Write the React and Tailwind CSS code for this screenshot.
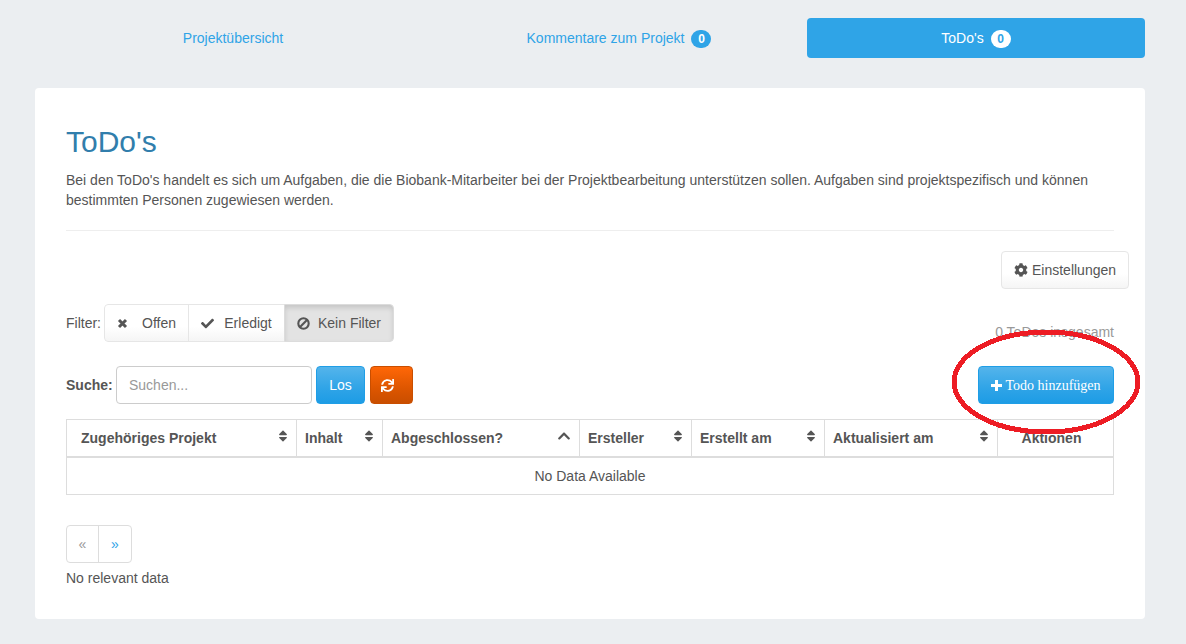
import React from 'react';
import { FaCheck, FaCog, FaSync, FaSort, FaChevronUp } from 'react-icons/fa';

const columns = [
  { label: 'Zugehöriges Projekt', width: 'w-[230px]', pad: 'pl-[14px] pr-[6px]' },
  { label: 'Inhalt', width: 'w-[86px]' },
  { label: 'Abgeschlossen?', width: 'w-[197px]', pad: 'pl-[8px] pr-[8px]', sorted: true },
  { label: 'Ersteller', width: 'w-[112px]' },
  { label: 'Erstellt am', width: 'w-[133px]' },
  { label: 'Aktualisiert am', width: 'w-[173px]' },
];

const btnDefault = 'bg-[linear-gradient(#ffffff,#ffffff_60%,#f5f5f5)] border border-[#e6e6e6]';
const btnPrimary = 'bg-[linear-gradient(#54b4eb,#2fa4e7_60%,#1d9ce5)] border border-[#1f9ee6] text-white';

function CrossIcon() {
  return (
    <svg width="11" height="11" viewBox="0 0 11 11">
      <path d="M2 2 L9 9 M9 2 L2 9" stroke="currentColor" strokeWidth="3" fill="none" />
    </svg>
  );
}

function BanIcon() {
  return (
    <svg width="13" height="13" viewBox="0 0 13 13">
      <circle cx="6.5" cy="6.5" r="5.2" stroke="currentColor" strokeWidth="2.1" fill="none" />
      <path d="M2.8 10.2 L10.2 2.8" stroke="currentColor" strokeWidth="2.1" fill="none" />
    </svg>
  );
}

function PlusIcon() {
  return (
    <svg width="11" height="11" viewBox="0 0 11 11">
      <path d="M5.5 0 V11 M0 5.5 H11" stroke="currentColor" strokeWidth="3" fill="none" />
    </svg>
  );
}

function FilterButton({ icon, label, width, gap, active, extra }) {
  return (
    <div
      className={`${width} ${extra} h-[38px] flex items-center justify-center ${gap} ${
        active ? 'bg-[#e3e3e3] border border-[#dcdcdc] shadow-[inset_0_3px_5px_rgba(0,0,0,0.125)]' : btnDefault
      }`}
    >
      {icon}
      <span>{label}</span>
    </div>
  );
}

export default function App() {
  return (
    <div className="relative h-[644px] overflow-hidden bg-[#ebeef1] text-sm leading-5 text-[#555555] font-['Liberation_Sans',Arial,sans-serif]">
      {/* tabs */}
      <div className="flex px-[35px] pt-[18px] h-[88px]">
        <div className="w-[396px] h-10 flex items-center justify-center text-[#2fa4e7]">Projektübersicht</div>
        <div className="w-[376px] h-10 flex items-center justify-center gap-[7px] text-[#2fa4e7]">
          Kommentare zum Projekt
          <span className="mt-0.5 w-5 h-[18px] rounded-[10px] bg-[#2fa4e7] text-white text-xs font-bold flex items-center justify-center">0</span>
        </div>
        <div className="w-[338px] h-10 rounded bg-[#2fa4e7] text-white flex items-center justify-center gap-[7px]">
          ToDo's
          <span className="mt-0.5 w-5 h-[18px] rounded-[10px] bg-white text-[#2fa4e7] text-xs font-bold flex items-center justify-center">0</span>
        </div>
      </div>

      {/* main card */}
      <div className="ml-[35px] w-[1110px] h-[531px] rounded bg-white pt-[37px] px-[31px]">
        <h1 className="text-[30px] leading-[33px] text-[#317eac]">ToDo's</h1>
        <p className="mt-3 text-[14px] leading-5">
          Bei den ToDo's handelt es sich um Aufgaben, die die Biobank-Mitarbeiter bei der Projektbearbeitung unterstützen sollen. Aufgaben sind projektspezifisch und können bestimmten Personen zugewiesen werden.
        </p>
        <div className="mt-5 h-px bg-[#eeeeee]" />

        <div className="mt-5 flex justify-end -mr-[15px]">
          <div className={`${btnDefault} w-[128px] h-[38px] rounded flex items-center justify-center gap-1`}>
            <FaCog className="text-[14px]" />
            Einstellungen
          </div>
        </div>

        <div className="mt-[15px] flex justify-between items-end">
          <div>
            <div className="flex items-center gap-[3px]">
              Filter:
              <div className="flex rounded overflow-hidden">
                <FilterButton extra="rounded-l" width="w-[85px]" gap="gap-[14px]" icon={<CrossIcon />} label="Offen" />
                <FilterButton extra="-ml-px" width="w-[97px]" gap="gap-[10px]" icon={<FaCheck className="text-[13px]" />} label="Erledigt" />
                <FilterButton extra="-ml-px rounded-r" width="w-[110px]" gap="gap-[8px]" active icon={<BanIcon />} label="Kein Filter" />
              </div>
            </div>
            <div className="mt-6 flex items-center">
              <span className="font-bold w-[50px]">Suche:</span>
              <div className="w-[196px] h-[38px] rounded border border-[#cccccc] px-3 flex items-center text-[#999999]">Suchen...</div>
              <div className={`${btnPrimary} ml-1 w-[49px] h-[38px] rounded flex items-center justify-center`}>Los</div>
              <div className="ml-[5px] w-[43px] h-[38px] rounded border border-[#c94e00] bg-[linear-gradient(#ff6707,#dd5600_60%,#c94e00)] text-white flex items-center justify-center pr-2">
                <FaSync className="text-[13px]" />
              </div>
            </div>
          </div>
          <div className="flex flex-col items-end">
            <div className="text-[#999999]">0 ToDos insgesamt</div>
            <div className={`${btnPrimary} mt-6 w-[136px] h-[38px] rounded flex items-center justify-center gap-[3px] font-['Liberation_Serif',serif]`}>
              <PlusIcon />
              <span className="pt-px">Todo hinzufügen</span>
            </div>
          </div>
        </div>

        {/* table */}
        <table className="mt-[15px] w-full table-fixed border-collapse border border-[#dddddd]">
          <thead>
            <tr className="h-[37px] border-b-2 border-[#dddddd]">
              {columns.map((col) => (
                <th key={col.label} className={`${col.width} border-r border-[#dddddd] p-0 font-bold text-left`}>
                  <div className={`flex items-center justify-between ${col.pad || 'pl-[8px] pr-[6px]'}`}>
                    <span>{col.label}</span>
                    {col.sorted ? <FaChevronUp className="text-[14px] -mt-1" /> : <FaSort className="text-[14px] -mt-1" />}
                  </div>
                </th>
              ))}
              <th className="p-0 pr-2 font-bold text-center">Aktionen</th>
            </tr>
          </thead>
          <tbody>
            <tr className="h-[38px]">
              <td colSpan={7} className="p-0 text-center">No Data Available</td>
            </tr>
          </tbody>
        </table>

        {/* pagination */}
        <div className="mt-[30px] flex w-[66px] h-[38px] rounded border border-[#dddddd]">
          <div className="w-[32px] border-r border-[#dddddd] flex items-center justify-center text-[#999999]">«</div>
          <div className="flex-1 flex items-center justify-center text-[#2fa4e7]">»</div>
        </div>
        <div className="mt-[5px]">No relevant data</div>
      </div>

      {/* red hand-drawn marker over the add button */}
      <svg className="absolute left-[950px] top-[328px]" width="192" height="108" viewBox="0 0 192 108" shapeRendering="crispEdges">
        <ellipse cx="96" cy="54" rx="92" ry="50" fill="none" stroke="#ed1c24" strokeWidth="5" />
      </svg>
    </div>
  );
}
